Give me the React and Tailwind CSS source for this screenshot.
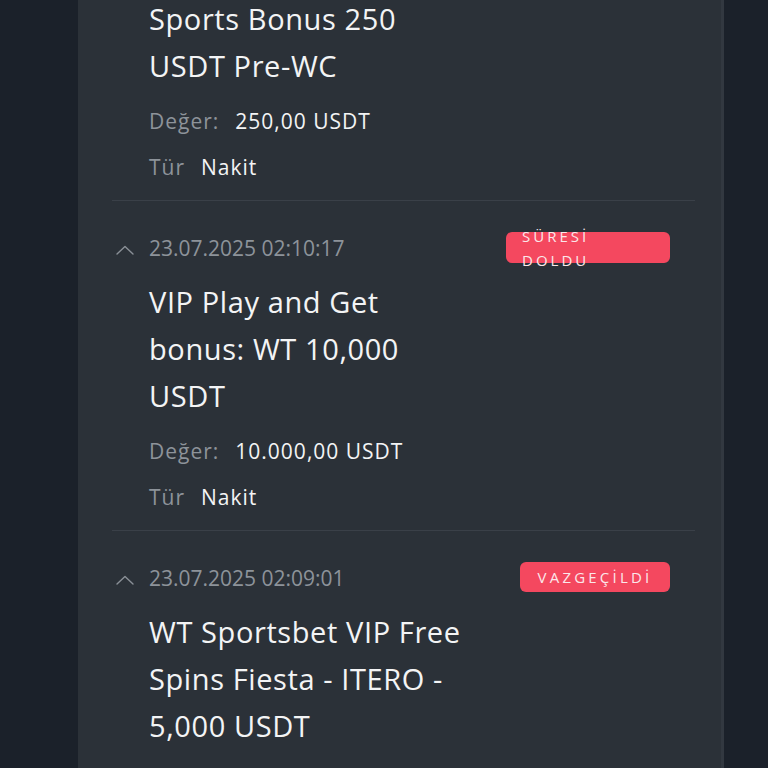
const bonuses = [
  {
    id: 1,
    date: null,
    title: ['Sports Bonus 250', 'USDT Pre-WC'],
    value: '250,00 USDT',
    type: 'Nakit',
  },
  {
    id: 2,
    date: '23.07.2025 02:10:17',
    status: 'expired',
    title: ['VIP Play and Get', 'bonus: WT 10,000', 'USDT'],
    value: '10.000,00 USDT',
    type: 'Nakit',
  },
  {
    id: 3,
    date: '23.07.2025 02:09:01',
    status: 'cancelled',
    title: ['WT Sportsbet VIP Free', 'Spins Fiesta - ITERO -', '5,000 USDT'],
    value: '5.000,00 USDT',
    type: 'Nakit',
  },
];

const ChevronUp = () => (
  <svg viewBox="0 0 18 10" className="h-[10px] w-[18px]" fill="none" stroke="#8a9097" strokeWidth="1.4">
    <path d="M1 9 9 1.5 17 9" strokeLinecap="round" strokeLinejoin="round" />
  </svg>
);

const StatusBadge = ({ status }) => {
  if (status === 'expired') {
    return (
      <div className="flex h-[31px] w-[164px] items-center rounded-md bg-[#f4485f] pl-4">
        <span className="text-[15px] leading-[24px] tracking-[3px] text-[#fbe7ea]">
          SÜRESİ
          <br />
          DOLDU
        </span>
      </div>
    );
  }

  return (
    <div className="flex h-[30px] w-[150px] items-center justify-center rounded-md bg-[#f4485f]">
      <span className="text-[15px] leading-[24px] tracking-[3.2px] text-[#fbe7ea]">VAZGEÇİLDİ</span>
    </div>
  );
};

const BonusRow = ({ bonus, first }) => (
  <div className={`border-b border-[#3a4048] pb-[18px] ${first ? '' : 'pt-[32px]'}`}>
    {bonus.date ? (
      <div className="flex items-start justify-between">
        <div className="flex h-[30px] items-center">
          <div className="flex w-[37px] items-center pl-[4px] pt-[4px]">
            <ChevronUp />
          </div>
          <span className="text-[21px] leading-[30px] text-[#8d939a]">{bonus.date}</span>
        </div>
        <div className="mr-[25px] -mt-[1px]">
          <StatusBadge status={bonus.status} />
        </div>
      </div>
    ) : null}

    <div className={`pl-[37px] ${bonus.date ? 'mt-[15px]' : ''}`}>
      <div className="text-[29px] leading-[47px] tracking-[0.6px] text-[#f3f4f5]">
        {bonus.title.map((line) => (
          <div key={line}>{line}</div>
        ))}
      </div>
      <div className="mt-[17px] flex gap-4 text-[21px] leading-[30px] tracking-[1px]">
        <span className="text-[#8d939a]">Değer:</span>
        <span className="text-[#f3f4f5]">{bonus.value}</span>
      </div>
      <div className="mt-[16px] flex gap-4 text-[21px] leading-[30px] tracking-[1px]">
        <span className="text-[#8d939a]">Tür</span>
        <span className="text-[#f3f4f5]">{bonus.type}</span>
      </div>
    </div>
  </div>
);

export default function App() {
  return (
    <div
      className="flex h-[768px] w-[768px] overflow-hidden bg-[#1b212a]"
      style={{ fontFamily: '"Open Sans", "Noto Sans", sans-serif' }}
    >
      <div className="ml-[78px] h-full w-[646px] border-r-[3px] border-[#323840] bg-[#2b3138]">
        <div className="-mt-[5px] pl-[34px] pr-[26px]">
          {bonuses.map((bonus, index) => (
            <BonusRow key={bonus.id} bonus={bonus} first={index === 0} />
          ))}
        </div>
      </div>
    </div>
  );
}
